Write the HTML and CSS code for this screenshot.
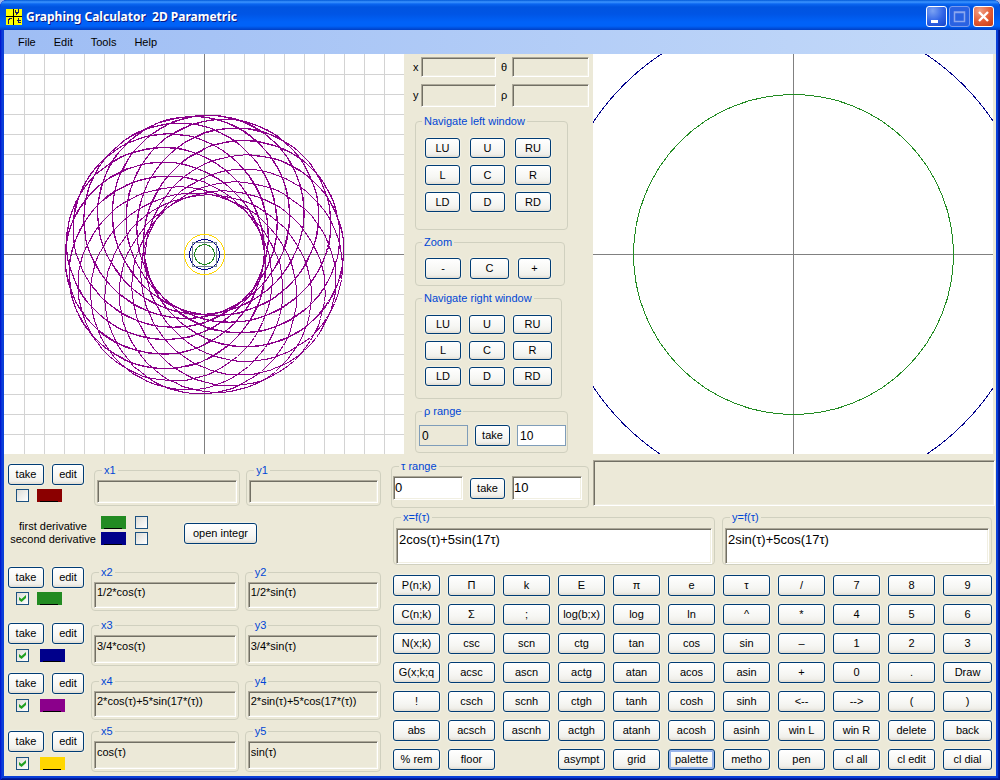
FILE: index.html
```html
<!DOCTYPE html>
<html lang="en">
<head>
<meta charset="utf-8">
<title>Graphing Calculator 2D Parametric</title>
<link rel="stylesheet" href="styles.css">
</head>
<body>
<div class="window">
  <header class="titlebar">
    <svg class="app-icon" width="16" height="16" viewBox="0 0 16 16" shape-rendering="crispEdges" aria-hidden="true">
      <rect width="16" height="16" fill="#ffff00"/>
      <path d="M7.500 0V16M0 7.500H16" stroke="#000" fill="none"/>
      <path d="M9.500 1V3L11 4.500M12.500 0V3L9.500 6.500M2.500 15V11L4 9.500H6M12.500 9V13.500H14.500M10.500 11.500H15" stroke="#1a1a60" fill="none"/>
    </svg>
    <h1 class="title">Graphing Calculator&nbsp; 2D Parametric</h1>
    <div class="caption-buttons">
      <button class="caption" aria-label="Minimize"><svg width="19" height="19" viewBox="0 0 19 19"><path d="M4 13H11V16H4Z" fill="#fff"/></svg></button>
      <button class="caption caption-disabled" aria-label="Maximize" disabled><svg width="19" height="19" viewBox="0 0 19 19"><path d="M4.500 5H14.500V14.500H4.500ZM4 5.500H15" stroke="#8ba6ee" stroke-width="1.500" fill="none"/></svg></button>
      <button class="caption caption-close" aria-label="Close"><svg width="19" height="19" viewBox="0 0 19 19"><path d="M5 5L14 14M14 5L5 14" stroke="#fff" stroke-width="2.400" fill="none"/></svg></button>
    </div>
  </header>
  <nav class="menubar">
    <button class="menu">File</button><button class="menu">Edit</button><button class="menu">Tools</button><button class="menu">Help</button>
  </nav>

  <main class="client">
    <section class="plots">
      <svg class="plot" id="plot-left" viewBox="0 0 400 400" shape-rendering="crispEdges" role="img" aria-label="Left window"></svg>

      <div class="panel">
        <div class="coords">
          <label for="cx">x</label><input id="cx" class="sunken" readonly>
          <label for="ct">θ</label><input id="ct" class="sunken" readonly>
          <label for="cy">y</label><input id="cy" class="sunken tall" readonly>
          <label for="cr">ρ</label><input id="cr" class="sunken tall" readonly>
        </div>
        <fieldset class="group nav-left">
          <legend>Navigate left window</legend>
          <div class="pad">
            <button class="btn">LU</button><button class="btn">U</button><button class="btn">RU</button>
            <button class="btn">L</button><button class="btn">C</button><button class="btn">R</button>
            <button class="btn">LD</button><button class="btn">D</button><button class="btn">RD</button>
          </div>
        </fieldset>
        <fieldset class="group zoom">
          <legend>Zoom</legend>
          <div class="pad">
            <button class="btn">-</button><button class="btn">C</button><button class="btn">+</button>
          </div>
        </fieldset>
        <fieldset class="group nav-right">
          <legend>Navigate right window</legend>
          <div class="pad">
            <button class="btn">LU</button><button class="btn">U</button><button class="btn">RU</button>
            <button class="btn">L</button><button class="btn">C</button><button class="btn">R</button>
            <button class="btn">LD</button><button class="btn">D</button><button class="btn">RD</button>
          </div>
        </fieldset>
        <fieldset class="group rho">
          <legend>ρ range</legend>
          <div class="range">
            <input class="flat flat-off" aria-label="ρ from" value="0" readonly>
            <button class="btn">take</button>
            <input class="flat" aria-label="ρ to" value="10">
          </div>
        </fieldset>
      </div>

      <svg class="plot" id="plot-right" viewBox="0 0 400 400" shape-rendering="crispEdges" role="img" aria-label="Right window"></svg>
    </section>

    <section class="lower">
      <div class="functions">
        <div class="fn fn-1">
          <div class="fn-controls">
            <button class="btn">take</button><button class="btn">edit</button>
            <input type="checkbox" class="check" aria-label="Show curve 1"><button class="swatch red" aria-label="Colour 1"></button>
          </div>
          <fieldset class="group"><legend>x1</legend><input class="sunken" aria-label="x1" readonly></fieldset>
          <fieldset class="group"><legend>y1</legend><input class="sunken" aria-label="y1" readonly></fieldset>
        </div>
        <div class="derivatives">
          <div class="deriv-labels"><label for="d1">first derivative</label><label for="d2">second derivative</label></div>
          <div class="deriv-controls">
            <button class="swatch green" aria-label="First derivative colour"></button><input type="checkbox" class="check" id="d1">
            <button class="swatch navy" aria-label="Second derivative colour"></button><input type="checkbox" class="check" id="d2">
          </div>
          <button class="btn integr">open integr</button>
        </div>
        <div class="fn fn-2">
          <div class="fn-controls">
            <button class="btn">take</button><button class="btn">edit</button>
            <input type="checkbox" class="check" aria-label="Show curve 2" checked><button class="swatch green" aria-label="Colour 2"></button>
          </div>
          <fieldset class="group"><legend>x2</legend><input class="sunken" aria-label="x2" value="1/2*cos(τ)" readonly></fieldset>
          <fieldset class="group"><legend>y2</legend><input class="sunken" aria-label="y2" value="1/2*sin(τ)" readonly></fieldset>
        </div>
        <div class="fn fn-3">
          <div class="fn-controls">
            <button class="btn">take</button><button class="btn">edit</button>
            <input type="checkbox" class="check" aria-label="Show curve 3" checked><button class="swatch navy" aria-label="Colour 3"></button>
          </div>
          <fieldset class="group"><legend>x3</legend><input class="sunken" aria-label="x3" value="3/4*cos(τ)" readonly></fieldset>
          <fieldset class="group"><legend>y3</legend><input class="sunken" aria-label="y3" value="3/4*sin(τ)" readonly></fieldset>
        </div>
        <div class="fn fn-4">
          <div class="fn-controls">
            <button class="btn">take</button><button class="btn">edit</button>
            <input type="checkbox" class="check" aria-label="Show curve 4" checked><button class="swatch purple" aria-label="Colour 4"></button>
          </div>
          <fieldset class="group"><legend>x4</legend><input class="sunken" aria-label="x4" value="2*cos(τ)+5*sin(17*(τ))" readonly></fieldset>
          <fieldset class="group"><legend>y4</legend><input class="sunken" aria-label="y4" value="2*sin(τ)+5*cos(17*(τ))" readonly></fieldset>
        </div>
        <div class="fn fn-5">
          <div class="fn-controls">
            <button class="btn">take</button><button class="btn">edit</button>
            <input type="checkbox" class="check" aria-label="Show curve 5" checked><button class="swatch gold" aria-label="Colour 5"></button>
          </div>
          <fieldset class="group"><legend>x5</legend><input class="sunken" aria-label="x5" value="cos(τ)" readonly></fieldset>
          <fieldset class="group"><legend>y5</legend><input class="sunken" aria-label="y5" value="sin(τ)" readonly></fieldset>
        </div>
      </div>

      <div class="editor">
        <div class="editor-top">
          <fieldset class="group tau">
            <legend>τ range</legend>
            <div class="range">
              <input class="sunken edit" aria-label="τ from" value="0">
              <button class="btn">take</button>
              <input class="sunken edit" aria-label="τ to" value="10">
            </div>
          </fieldset>
          <input class="sunken output" aria-label="Result" readonly>
        </div>
        <div class="formulas">
          <fieldset class="group"><legend>x=f(τ)</legend><input class="sunken edit" aria-label="x=f(τ)" value="2cos(τ)+5sin(17τ)"></fieldset>
          <fieldset class="group"><legend>y=f(τ)</legend><input class="sunken edit" aria-label="y=f(τ)" value="2sin(τ)+5cos(17τ)"></fieldset>
        </div>
        <div class="keypad">
          <button class="btn">P(n;k)</button><button class="btn">Π</button><button class="btn">k</button><button class="btn">E</button><button class="btn">π</button><button class="btn">e</button><button class="btn">τ</button><button class="btn">/</button><button class="btn">7</button><button class="btn">8</button><button class="btn">9</button>
          <button class="btn">C(n;k)</button><button class="btn">Σ</button><button class="btn">;</button><button class="btn">log(b;x)</button><button class="btn">log</button><button class="btn">ln</button><button class="btn">^</button><button class="btn">*</button><button class="btn">4</button><button class="btn">5</button><button class="btn">6</button>
          <button class="btn">N(x;k)</button><button class="btn">csc</button><button class="btn">scn</button><button class="btn">ctg</button><button class="btn">tan</button><button class="btn">cos</button><button class="btn">sin</button><button class="btn">–</button><button class="btn">1</button><button class="btn">2</button><button class="btn">3</button>
          <button class="btn">G(x;k;q</button><button class="btn">acsc</button><button class="btn">ascn</button><button class="btn">actg</button><button class="btn">atan</button><button class="btn">acos</button><button class="btn">asin</button><button class="btn">+</button><button class="btn">0</button><button class="btn">.</button><button class="btn">Draw</button>
          <button class="btn">!</button><button class="btn">csch</button><button class="btn">scnh</button><button class="btn">ctgh</button><button class="btn">tanh</button><button class="btn">cosh</button><button class="btn">sinh</button><button class="btn">&lt;--</button><button class="btn">--&gt;</button><button class="btn">(</button><button class="btn">)</button>
          <button class="btn">abs</button><button class="btn">acsch</button><button class="btn">ascnh</button><button class="btn">actgh</button><button class="btn">atanh</button><button class="btn">acosh</button><button class="btn">asinh</button><button class="btn">win L</button><button class="btn">win R</button><button class="btn">delete</button><button class="btn">back</button>
          <button class="btn">% rem</button><button class="btn">floor</button><span></span><button class="btn">asympt</button><button class="btn">grid</button><button class="btn focused">palette</button><button class="btn">metho</button><button class="btn">pen</button><button class="btn">cl all</button><button class="btn">cl edit</button><button class="btn">cl dial</button>
        </div>
      </div>
    </section>
  </main>
</div>
<script src="plots.js"></script>
</body>
</html>
```
FILE: styles.css
```css
* { box-sizing: border-box; }

body {
  margin: 0;
  background: #9db9eb;
  font: 11px/13px "Liberation Sans", Arial, sans-serif;
  color: #000;
}

button, input { font: inherit; color: inherit; margin: 0; border-radius: 0; }

.window {
  display: flex;
  flex-direction: column;
  min-height: 100vh;
  padding: 0 4px 4px;
  border-radius: 7px 7px 0 0;
  background: #0a3fd8;
  box-shadow: inset 1px 0 #0019cf, inset -1px -1px #00138c, inset 2px 0 #0831d9, inset -2px -2px #001ea0;
}

/* title bar */
.titlebar {
  display: flex;
  align-items: center;
  gap: 4px;
  height: 30px;
  margin: 0 -4px;
  padding: 3px 6px 0;
  border-radius: 7px 7px 0 0;
  background: linear-gradient(#0058d8 0, #3d95ff 2px, #0a66f0 4px, #0054e0 7px, #0055e5 14px, #0062f8 22px, #0062f8 26px, #003fc4 30px);
}
.title {
  flex: 1;
  margin: 0;
  font: bold 12px/18px "Noto Sans", "Open Sans", sans-serif;
  color: #fff;
  text-shadow: 1px 1px #0a1883;
}
.caption-buttons { display: flex; gap: 2px; }
.caption {
  width: 21px;
  height: 21px;
  padding: 0;
  border: 1px solid #fff;
  border-radius: 3px;
  background: radial-gradient(circle at 30% 20%, #7ba2f2, #2f63e6 55%, #1644c8);
}
.caption svg { display: block; }
.caption-disabled { border-color: #7a9bed; background: #2a62e2; }
.caption-close { margin-left: 1px; background: radial-gradient(circle at 30% 20%, #f0a086, #e35a33 55%, #c63a12); }

/* menu bar */
.menubar {
  display: flex;
  gap: 2px;
  height: 24px;
  padding-left: 6px;
  background: linear-gradient(90deg, #9ebdf4, #c4daf9);
}
.menu { padding: 0 8px; border: 0; background: none; }

.client { flex: 1; background: #ece9d8; }

.plots {
  display: grid;
  grid-template-columns: minmax(0, 1fr) 189px minmax(0, 1fr);
  padding-right: 3px;
}
.plot { display: block; width: 100%; background: #fff; }

/* shared controls */
.group {
  display: block;
  min-width: 0;
  margin: 0;
  padding: 0 2px 2px;
  border: 1px solid #d0d0bf;
  border-radius: 4px;
}
.group legend {
  height: 13px;
  margin-left: 5px;
  padding: 0 2px;
  color: #0046d5;
}
.btn {
  height: 21px;
  min-width: 0;
  padding: 0;
  overflow: hidden;
  white-space: nowrap;
  border: 1px solid #003c74;
  border-radius: 3px;
  background: linear-gradient(#fff, #f6f6f3 60%, #f0efea 85%, #e0dcd2);
  box-shadow: 0 0 1px 1px #f3f1e6;
}
.focused { box-shadow: inset 0 0 0 2px #98b4ea; }
.sunken {
  display: block;
  width: 100%;
  min-width: 0;
  height: 26px;
  padding: 2px 2px 8px;
  outline: 0;
  border: 1px solid;
  border-color: #aca899 #fff #fff #aca899;
  background: #ece9d8;
  box-shadow: inset 1px 1px #716f64, inset -1px -1px #f1efe2;
}
.edit { background: #fff; font-size: 13px; }
.flat {
  width: 49px;
  height: 21px;
  padding: 0 2px;
  border: 1px solid #7f9db9;
  background: #fff;
  font-size: 12px;
}
.flat-off { background: #ece9d8; }
.check {
  appearance: none;
  width: 13px;
  height: 13px;
  border: 1px solid #1c5180;
  background: linear-gradient(135deg, #dcdcd7, #fff);
}
.check:checked::before {
  content: "";
  display: block;
  width: 7px;
  height: 7px;
  margin: 2px;
  background: #21a121;
  clip-path: polygon(0 28%, 36% 58%, 100% 0, 100% 44%, 36% 100%, 0 72%);
}
.swatch {
  width: 25px;
  height: 13px;
  padding: 0;
  border: 0;
  background: linear-gradient(#000, #000) 3px 12px / 18px 1px no-repeat;
}
.red { background-color: #8b0000; }
.green { background-color: #228b22; }
.navy { background-color: #00008b; }
.purple { background-color: #8b008b; }
.gold { background-color: #ffd700; }

/* middle panel */
.panel {
  display: flex;
  flex-direction: column;
  gap: 6px;
  padding: 3px 4px 1px 8px;
}
.coords {
  display: grid;
  grid-template-columns: 8px 75px 16px 77px;
  row-gap: 7px;
  align-items: center;
  padding: 0 0 2px 1px;
}
.coords .sunken { height: 20px; }
.coords .tall { height: 23px; }
.coords .sunken + label { padding-left: 5px; }
.coords .sunken + label[for="cy"] { padding-left: 0; }
.panel .group { margin-left: 3px; padding-left: 9px; }
.pad { display: grid; padding-top: 10px; }
.nav-left { width: 153px; height: 115px; }
.nav-left .pad { grid-template-columns: 35px 35px 36px; gap: 7px 10px; }
.nav-left .btn { height: 20px; }
.zoom { width: 150px; height: 50px; }
.zoom .pad { grid-template-columns: 36px 39px 33px; column-gap: 9px; padding-top: 9px; }
.nav-right { width: 147px; height: 107px; }
.nav-right .pad { grid-template-columns: 36px 36px 39px; gap: 7px 8px; }
.nav-right .btn { height: 19px; }
.panel .rho { width: 153px; height: 48px; padding-left: 3px; }
.rho legend { margin-left: 3px; }
.nav-left legend, .nav-right legend, .zoom legend { margin-left: -3px; }
.range { display: flex; gap: 7px; }
.rho .range { padding-top: 7px; }
.range .btn { flex: 0 0 35px; }

/* lower half */
.lower { display: grid; grid-template-columns: 387px minmax(0, 1fr); }
.functions { padding: 10px 10px 4px 4px; }
.fn { display: flex; align-items: flex-start; }
.fn-controls {
  display: grid;
  flex: 0 0 83px;
  grid-template-columns: 8px 21px 15px 32px;
  row-gap: 4px;
}
.fn-controls .btn:first-child { grid-column: 1 / 4; width: 36px; }
.fn-controls .btn:nth-child(2) { grid-column: 4; }
.fn-controls .check { grid-column: 2; }
.fn-controls .swatch { grid-column: 3; }
.fn .group { flex: 148 1 0; }
.fn .group + .group { flex-grow: 136; margin-left: 6px; }
.fn .group .sunken { margin-top: 3px; }
.fn-1 .fn-controls { flex-basis: 86px; }
.fn-1 .sunken { height: 23px; }
.fn-2 { padding-top: 20px; }
.fn-2 .fn-controls { padding-top: 1px; }
.fn-3 { padding-top: 8px; }
.fn-3 .fn-controls { padding-top: 4px; }
.fn-4 { padding-top: 7px; }
.fn-4 .group { margin-top: 2px; }
.fn-5 { padding-top: 5px; }
.fn-5 .fn-controls { padding-top: 6px; }
.fn-3 .sunken, .fn-5 .sunken { height: 28px; }
.fn-3 .fn-controls, .fn-4 .fn-controls, .fn-5 .fn-controls { row-gap: 5px; }
.fn-4 .swatch, .fn-5 .swatch, .fn-3 .swatch { margin-left: 3px; }

.derivatives { display: flex; align-items: flex-start; padding-top: 10px; }
.deriv-labels {
  display: flex;
  flex-direction: column;
  align-items: center;
  width: 90px;
  padding-top: 4px;
}
.deriv-controls {
  display: grid;
  grid-template-columns: 25px 13px;
  gap: 3px 9px;
  margin-left: 3px;
}
.integr { width: 73px; margin: 7px 0 0 36px; }

.editor { padding: 6px 4px 4px 0; }
.editor-top { display: flex; gap: 4px; margin-right: -3px; }
.tau { flex: 0 0 198px; height: 48px; padding: 0 0 0 1px; }
.tau legend { margin-left: 6px; }
.tau .range { align-items: center; padding-top: 3px; }
.tau .sunken { width: 70px; height: 24px; padding: 1px 1px 3px; }
.output { flex: 1; height: 46px; }
.formulas {
  display: grid;
  grid-template-columns: 322fr 270fr;
  gap: 7px;
  padding: 3px 0 0 2px;
}
.formulas .sunken { height: 36px; margin-top: 4px; padding: 1px 2px 14px; }
.formulas .group { height: 54px; }
.keypad {
  display: grid;
  grid-template-columns: repeat(10, minmax(0, 47fr)) minmax(0, 49fr);
  gap: 8px;
  padding: 10px 0 0 2px;
}
```
FILE: plots.js
```javascript
const NS = "http://www.w3.org/2000/svg";
const MID = 200.5;

function add(svg, name, attrs) {
  const el = document.createElementNS(NS, name);
  for (const key in attrs) el.setAttribute(key, attrs[key]);
  svg.appendChild(el);
}

// Vertices snap to whole pixels, as the plotter does for every range step.
function curve(svg, scale, color, tMax, step, fx, fy) {
  const pts = [];
  for (let t = 0; t <= tMax; t += step) {
    pts.push((MID + Math.trunc(scale * fx(t))) + "," + (MID - Math.trunc(scale * fy(t))));
  }
  add(svg, "polyline", { points: pts.join(" "), fill: "none", stroke: color });
}

function axes(svg) {
  add(svg, "path", { d: "M200.5 0V400M0 200.5H400", stroke: "#808080", fill: "none" });
}

function circle(svg, r, color) {
  add(svg, "circle", { cx: MID, cy: MID, r: r, stroke: color, fill: "none" });
}

const left = document.getElementById("plot-left");
let grid = "";
for (let p = 20; p < 400; p += 20) grid += `M${p + 0.5} 0V400M0 ${p + 0.5}H400`;
add(left, "path", { d: grid, stroke: "#d3d3d3", fill: "none" });
axes(left);
circle(left, 10, "#228b22");
circle(left, 15, "#00008b");
circle(left, 20, "#ffd700");
add(left, "rect", { x: 188.5, y: 188.5, width: 24, height: 24, stroke: "#708090", fill: "none" });
curve(left, 20, "#8b008b", 10, 0.005,
  t => 2 * Math.cos(t) + 5 * Math.sin(17 * t),
  t => 2 * Math.sin(t) + 5 * Math.cos(17 * t));

const right = document.getElementById("plot-right");
axes(right);
circle(right, 160, "#228b22");
circle(right, 240, "#00008b");
```
